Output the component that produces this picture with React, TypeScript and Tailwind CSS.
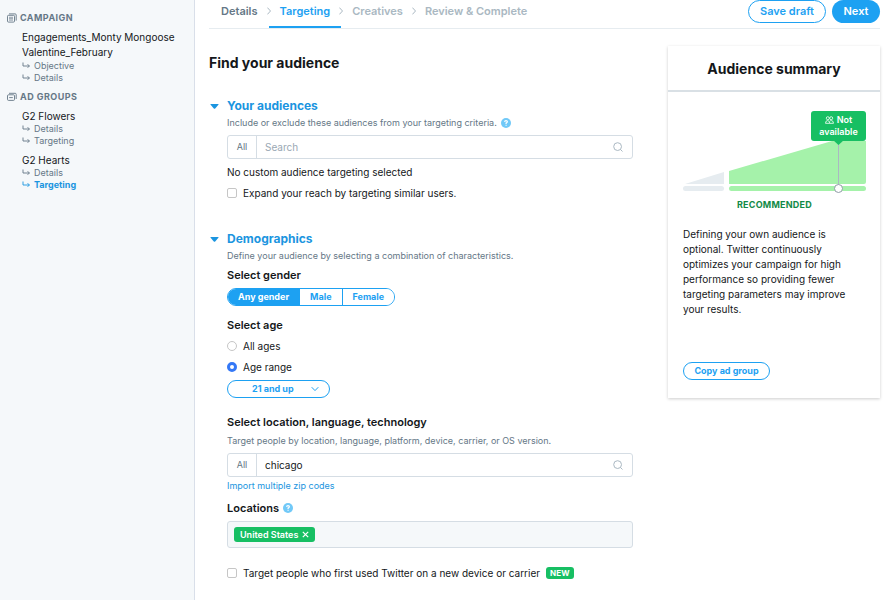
import { useState, type ReactNode } from "react";

const regular = "text-[10px] leading-4";

function CampaignIcon({ lines }: { lines: boolean }) {
  return (
    <svg className="h-[10px] w-[10px] shrink-0" viewBox="0 0 10 10" fill="none" stroke="#657786" strokeWidth="0.9" aria-hidden="true">
      {lines ? (
        <>
          <rect x="0.5" y="2.3" width="7" height="6.8" rx="1" />
          <path d="M2 0.9 H8.2 Q9.2 0.9 9.2 2 V7.6" />
          <path d="M2 4.3 H6 M2 5.7 H6 M2 7.1 H6" strokeWidth="0.7" />
        </>
      ) : (
        <>
          <rect x="0.5" y="2.8" width="7" height="5.6" rx="1" />
          <path d="M2 1.3 H8.2 Q9.2 1.3 9.2 2.3 V7" />
          <path d="M2.2 5.6 H5.8" />
        </>
      )}
    </svg>
  );
}

function SideHeading({ lines, children }: { lines: boolean; children: ReactNode }) {
  return (
    <h2 className="flex items-center gap-[3px] pl-[7px] text-[9px] leading-3 font-bold tracking-wider text-[#657786]">
      <CampaignIcon lines={lines} />
      {children}
    </h2>
  );
}

function SideLink({ active = false, children }: { active?: boolean; children: string }) {
  return (
    <li>
      <a
        href="#"
        className={`flex items-center gap-1 text-[9px] leading-3 ${active ? "font-bold text-[#1b95e0]" : "text-[#657786]"}`}
      >
        <svg className="h-2 w-2" viewBox="0 0 8 8" fill="none" stroke="currentColor" strokeWidth="0.9" aria-hidden="true">
          <path d="M1 0.5 V4 H7.4 M5.6 2.2 L7.4 4 L5.6 5.8" />
        </svg>
        {children}
      </a>
    </li>
  );
}

function Separator() {
  return (
    <li aria-hidden="true" className="-mx-0.5 flex items-center">
      <svg className="h-2 w-1" viewBox="0 0 4 8" fill="none" stroke="#aab8c2">
        <path d="M0.4 0.6 L3.5 4 L0.4 7.4" />
      </svg>
    </li>
  );
}

function Help() {
  return (
    <button type="button" aria-label="Help" className="flex h-[10px] w-[10px] items-center justify-center rounded-full bg-[#71c9f8]">
      <svg className="h-[10px] w-[10px]" viewBox="0 0 10 10" fill="none" stroke="#fff" strokeWidth="1.2" aria-hidden="true">
        <path d="M3.6 3.9 Q3.7 2.6 5 2.6 Q6.4 2.6 6.4 3.8 Q6.4 4.6 5.1 5 V5.9" />
        <path d="M5.1 6.7 V7.8" />
      </svg>
    </button>
  );
}

function SectionTitle({ children }: { children: string }) {
  return (
    <h2 className="-ml-[17px] text-[12px] leading-4 font-bold text-[#1b95e0]">
      <button type="button" aria-expanded="true" className="flex items-center gap-2">
        <svg className="h-[5px] w-[9px]" viewBox="0 0 9 5" fill="#1b95e0" aria-hidden="true">
          <path d="M1 0 H8 Q9 0 8.4 0.8 L5.2 4.5 Q4.5 5.2 3.8 4.5 L0.6 0.8 Q0 0 1 0Z" />
        </svg>
        {children}
      </button>
    </h2>
  );
}

function SearchBox({ label, initial = "" }: { label: string; initial?: string }) {
  const [value, setValue] = useState(initial);
  return (
    <div className="mt-[5px] flex h-6 items-center rounded-[3px] border border-[#d5dde4] bg-white">
      <button type="button" className="h-full w-[29px] border-r border-[#d5dde4] text-[9px] text-[#657786]">
        All
      </button>
      <input
        type="text"
        aria-label={label}
        placeholder="Search"
        value={value}
        onChange={(e) => setValue(e.target.value)}
        className="min-w-0 flex-1 px-2 text-[10px] leading-4 outline-none placeholder:text-[#9aa8b4]"
      />
      <svg className="mr-[9px] h-[10px] w-[10px]" viewBox="0 0 10 10" fill="none" stroke="#aab8c2" aria-hidden="true">
        <circle cx="4.6" cy="4.6" r="3.9" />
        <path d="M7.4 7.4 L9.5 9.5" />
      </svg>
    </div>
  );
}

const boxClass = "h-[10px] w-[10px] shrink-0 appearance-none border border-[#c6c6c6] bg-white";
const radioClass = `${boxClass} rounded-full checked:border-[3px] checked:border-[#3478f6]`;

function Sidebar() {
  return (
    <aside className="w-[195px] shrink-0 border-r border-[#d9dfe9] bg-[#f5f8fa] pt-3">
      <SideHeading lines>CAMPAIGN</SideHeading>
      <div className="mt-1.5 pl-[22px]">
        <h3 className="text-[10px] leading-[15px]">
          Engagements_Monty Mongoose
          <br />
          Valentine_February
        </h3>
        <ul>
          <SideLink>Objective</SideLink>
          <SideLink>Details</SideLink>
        </ul>
      </div>
      <div className="mt-[7px]">
        <SideHeading lines={false}>AD GROUPS</SideHeading>
      </div>
      <div className="mt-1.5 flex flex-col gap-1.5 pl-[22px]">
        <div>
          <h3 className="text-[10px] leading-[14px]">G2 Flowers</h3>
          <ul>
            <SideLink>Details</SideLink>
            <SideLink>Targeting</SideLink>
          </ul>
        </div>
        <div>
          <h3 className="text-[10px] leading-[14px]">G2 Hearts</h3>
          <ul>
            <SideLink>Details</SideLink>
            <SideLink active>Targeting</SideLink>
          </ul>
        </div>
      </div>
    </aside>
  );
}

function TopBar() {
  return (
    <header className="flex h-[29px] justify-between border-b border-[#e6ecf0]">
      <ol className="flex pl-px text-[11px] leading-[22px] font-semibold text-[#aab8c2] [&_svg]:mb-1.5">
        <li className="px-[11px]">
          <a href="#" className="text-[#657786]">Details</a>
        </li>
        <Separator />
        <li className="border-b-2 border-[#1da1f2] px-[11px]">
          <a href="#" aria-current="step" className="text-[#1da1f2]">Targeting</a>
        </li>
        <Separator />
        <li className="px-[11px]">Creatives</li>
        <Separator />
        <li className="px-[11px]">Review &amp; Complete</li>
      </ol>
      <div className="flex items-start gap-1.5 text-[11px] font-semibold">
        <button type="button" className="h-[23px] w-[78px] rounded-full border border-[#1da1f2] text-[#1da1f2]">
          Save draft
        </button>
        <button type="button" className="h-[23px] w-12 rounded-full bg-[#1da1f2] text-white">
          Next
        </button>
      </div>
    </header>
  );
}

function AudienceSummary() {
  return (
    <aside className="mt-[17px] w-[212px] shrink-0 self-start bg-white shadow-[0_1px_3px_rgba(0,0,0,0.2)]">
      <h2 className="border-b-2 border-[#d9e0e5] pt-[13px] pb-[11px] text-center text-[14px] leading-5 font-bold">Audience summary</h2>
      <div className="pt-[19px] pr-[14px] pb-[18px] pl-[15px]">
        <div className="relative">
          <svg className="block h-[82px] w-full" viewBox="0 0 183 82" aria-hidden="true">
            <path d="M2 73 L41 61 V73Z" fill="#e6ecf0" />
            <path d="M46 60 L149 30 H183 V71 Q183 73 181 73 H46Z" fill="#a5f2aa" />
            <rect x="0" y="75" width="41" height="5" rx="2.5" fill="#e6ecf0" />
            <rect x="46" y="75" width="137" height="5" rx="2.5" fill="#a5f2aa" />
            <path d="M155.5 30 V75" stroke="#aab8c2" />
            <path d="M150 29 H161 L155.500 34Z" fill="#17bf63" />
          </svg>
          <div className="absolute top-0 right-0 w-[55px] rounded-[3px] bg-[#17bf63] py-[3px] text-center text-[9px] leading-3 font-semibold text-white">
            <svg className="mr-[3px] inline h-[8px] w-[9px] align-[-1px]" viewBox="0 0 9 8" fill="none" stroke="#fff" strokeWidth="0.8" aria-hidden="true">
              <circle cx="2.800" cy="2.200" r="1.500" />
              <circle cx="6.200" cy="2.200" r="1.500" />
              <path d="M0.500 7.300 Q0.500 4.600 2.600 4.600 Q4.600 4.600 4.800 7.300Z M4.600 5.200 Q5.200 4.600 6.300 4.600 Q8.400 4.600 8.500 7.300 H4.800" />
            </svg>
            Not
            <br />
            available
          </div>
          <input
            type="range"
            aria-label="Audience size"
            defaultValue={87}
            className="absolute bottom-0 left-0 h-[9px] w-full appearance-none bg-transparent [&::-webkit-slider-thumb]:h-[9px] [&::-webkit-slider-thumb]:w-[9px] [&::-webkit-slider-thumb]:appearance-none [&::-webkit-slider-thumb]:rounded-full [&::-webkit-slider-thumb]:border [&::-webkit-slider-thumb]:border-[#8f9ba6] [&::-webkit-slider-thumb]:bg-white"
          />
        </div>
        <p className="mt-1.5 text-center text-[9px] leading-3 font-bold tracking-wide text-[#118a46]">RECOMMENDED</p>
        <p className="mt-4 pr-4 text-[10px] leading-[15px]">
          Defining your own audience is optional. Twitter continuously optimizes your campaign for high performance so providing fewer
          targeting parameters may improve your results.
        </p>
        <button type="button" className="mt-[45px] h-[18px] w-[87px] rounded-full border border-[#1da1f2] text-[9px] font-bold text-[#1da1f2]">
          Copy ad group
        </button>
      </div>
    </aside>
  );
}

export default function App() {
  const [gender, setGender] = useState("Any gender");
  const [ageMode, setAgeMode] = useState("range");
  return (
    <div className="flex min-h-screen bg-white font-['Inter','Liberation_Sans',sans-serif] text-[#14171a]">
      <Sidebar />
      <div className="min-w-0 flex-1 pr-[10px] pl-[14px]">
        <TopBar />
        <div className="flex gap-[35px]">
          <main className="min-w-0 flex-1 pt-6 pb-4">
            <h1 className="text-[14px] leading-5 font-bold">Find your audience</h1>

            <section className="mt-[25px] pl-[18px]">
              <SectionTitle>Your audiences</SectionTitle>
              <div className="mt-0.5 flex items-center gap-1 text-[9px] leading-[14px] text-[#657786]">
                Include or exclude these audiences from your targeting criteria.
                <Help />
              </div>
              <SearchBox label="Search audiences" />
              <p className={`mt-[5px] ${regular}`}>No custom audience targeting selected</p>
              <label className={`mt-[5px] flex items-center gap-1.5 ${regular}`}>
                <input type="checkbox" className={`${boxClass} rounded-[2px] checked:bg-[#3478f6]`} />
                Expand your reach by targeting similar users.
              </label>
            </section>

            <section className="mt-[30px] pl-[18px]">
              <SectionTitle>Demographics</SectionTitle>
              <p className="mt-0.5 text-[9px] leading-[14px] text-[#657786]">
                Define your audience by selecting a combination of characteristics.
              </p>
              <h3 className="mt-1 text-[11px] leading-4 font-semibold">Select gender</h3>
              <div className="mt-[5px] flex h-[18px] w-fit overflow-hidden rounded-full border border-[#1da1f2] text-[9px] font-bold">
                {["Any gender", "Male", "Female"].map((g) => (
                  <button
                    key={g}
                    type="button"
                    aria-pressed={gender === g}
                    onClick={() => setGender(g)}
                    className={`border-l border-[#1da1f2] px-[10px] first:border-l-0 ${
                      gender === g ? "bg-[#1da1f2] text-white" : "bg-white text-[#1da1f2]"
                    }`}
                  >
                    {g}
                  </button>
                ))}
              </div>
              <h3 className="mt-[11px] text-[11px] leading-4 font-semibold">Select age</h3>
              <label className={`mt-[5px] flex items-center gap-1.5 ${regular}`}>
                <input type="radio" name="age" checked={ageMode === "all"} onChange={() => setAgeMode("all")} className={radioClass} />
                All ages
              </label>
              <label className={`mt-[5px] flex items-center gap-1.5 ${regular}`}>
                <input type="radio" name="age" checked={ageMode === "range"} onChange={() => setAgeMode("range")} className={radioClass} />
                Age range
              </label>
              <div className="relative mt-[5px] h-[18px] w-[103px]">
                <select
                  aria-label="Age range"
                  className="block h-full w-full appearance-none rounded-full border border-[#1da1f2] bg-white pl-6 text-[9px] font-bold text-[#1da1f2]"
                >
                  <option>21 and up</option>
                </select>
                <svg
                  className="pointer-events-none absolute top-[6px] right-[11px] h-[6px] w-[8px]"
                  viewBox="0 0 8 6"
                  fill="none"
                  stroke="#1da1f2"
                  aria-hidden="true"
                >
                  <path d="M0.700 1.200 L4 4.600 L7.300 1.200" />
                </svg>
              </div>

              <h3 className="mt-4 text-[11px] leading-4 font-semibold">Select location, language, technology</h3>
              <p className="mt-1 text-[9px] leading-[14px] text-[#657786]">
                Target people by location, language, platform, device, carrier, or OS version.
              </p>
              <SearchBox label="Search locations, languages and technology" initial="chicago" />
              <a href="#" className="mt-0.5 block text-[9px] leading-[14px] text-[#1b95e0]">
                Import multiple zip codes
              </a>
              <h3 className="mt-[7px] flex items-center gap-1 text-[11px] leading-4 font-semibold">
                Locations
                <Help />
              </h3>
              <div className="mt-[5px] flex h-[27px] items-center rounded-[3px] border border-[#d5dde4] bg-[#f5f8fa] px-1.5">
                <span className="flex h-[15px] items-center gap-1 rounded-[3px] bg-[#17bf63] px-1.5 text-[9px] font-semibold text-white">
                  United States
                  <button type="button" aria-label="Remove United States">
                    <svg className="h-[7px] w-[7px]" viewBox="0 0 7 7" stroke="#fff" strokeWidth="1.200" aria-hidden="true">
                      <path d="M0.800 0.800 L6.200 6.200 M6.200 0.800 L0.800 6.200" />
                    </svg>
                  </button>
                </span>
              </div>
              <label className={`mt-[17px] flex items-center gap-1.5 ${regular}`}>
                <input type="checkbox" className={`${boxClass} rounded-[2px] checked:bg-[#3478f6]`} />
                Target people who first used Twitter on a new device or carrier
                <span className="rounded-[3px] bg-[#17bf63] px-1 text-[8px] leading-3 font-bold tracking-wide text-white">NEW</span>
              </label>
            </section>
          </main>
          <AudienceSummary />
        </div>
      </div>
    </div>
  );
}
